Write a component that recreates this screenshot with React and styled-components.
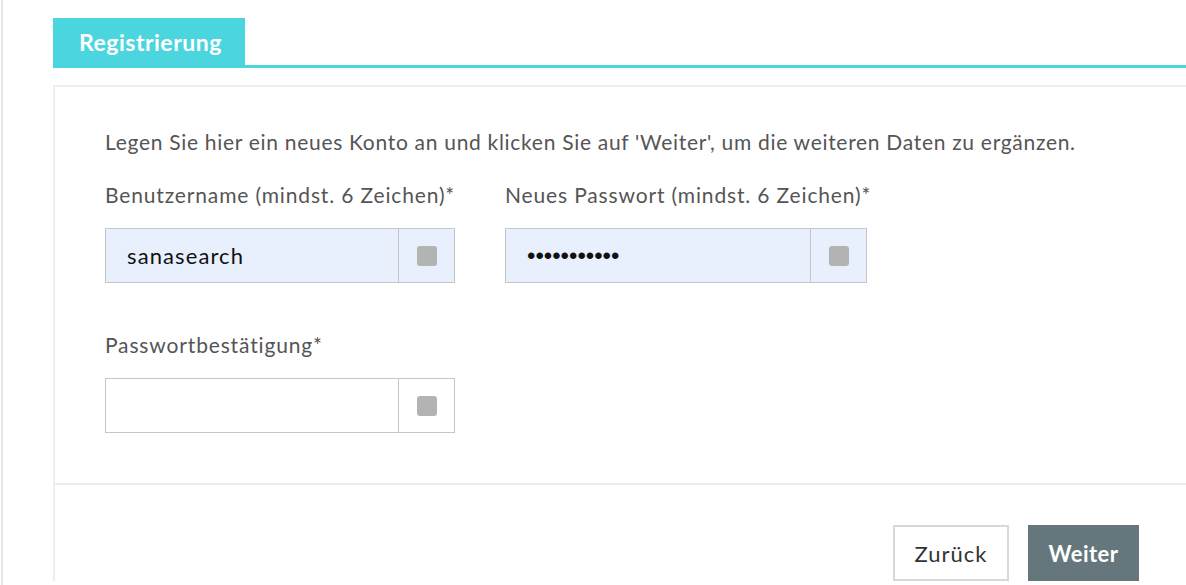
import React from "react";
import styled, { createGlobalStyle } from "styled-components";

const Global = createGlobalStyle`
  html, body { margin: 0; padding: 0; background: #fff; }
  body { font-family: Lato, "Open Sans", "Liberation Sans", sans-serif; overflow: hidden; }
  * { box-sizing: border-box; }
`;

const Page = styled.div`
  margin-left: 1px;
  border-left: 2px solid #e6e6e6;
  min-height: 585px;
  padding: 18px 0 0 50px;
`;

const TabBar = styled.div`
  display: flex;
  align-items: flex-end;
`;

const Tab = styled.div`
  width: 192px;
  height: 50px;
  background: #4bd5df;
  color: #fff;
  font-weight: 700;
  font-size: 23px;
  letter-spacing: 0.5px;
  display: flex;
  align-items: center;
  padding-left: 26px;
  padding-bottom: 2px;
`;

const TabLine = styled.div`
  flex: 1;
  height: 3px;
  background: #4bd5df;
`;

const Panel = styled.div`
  margin-top: 17px;
  border-top: 2px solid #efefef;
  border-left: 2px solid #efefef;
`;

const Body = styled.div`
  padding: 43px 0 50px 50px;
  border-bottom: 2px solid #ececec;
`;

const Intro = styled.p`
  margin: 0 0 29px;
  font-size: 21px;
  letter-spacing: 0.7px;
  line-height: 24px;
  color: #555;
  white-space: nowrap;
`;

const Grid = styled.div`
  display: grid;
  grid-template-columns: 350px 362px;
  column-gap: 50px;
  row-gap: 50px;
`;

const Field = styled.div`
  display: flex;
  flex-direction: column;
  gap: 21px;
`;

const Label = styled.label`
  font-size: 21px;
  letter-spacing: 0.85px;
  line-height: 24px;
  color: #555;
  white-space: nowrap;
`;

const InputGroup = styled.div`
  display: flex;
  height: 55px;
  border: 1px solid #c6c6c6;
  background: ${(p) => (p.$filled ? "#e8f0fe" : "#fff")};
`;

const Input = styled.input`
  flex: 1;
  min-width: 0;
  border: none;
  outline: none;
  background: transparent;
  padding: 0 0 0 21px;
  font-family: ${(p) => (p.type === "password" ? '"Liberation Sans", Arial, sans-serif' : 'Lato, "Open Sans", sans-serif')};
  font-size: ${(p) => (p.type === "password" ? "24px" : "22px")};
  letter-spacing: ${(p) => (p.type === "password" ? "0" : "1.1px")};
  color: #111;
`;

const Addon = styled.div`
  width: 56px;
  border-left: 1px solid #c6c6c6;
  display: flex;
  align-items: center;
  justify-content: center;
`;

const Square = styled.span`
  width: 20px;
  height: 20px;
  border-radius: 3px;
  background: #b3b3b3;
`;

const Footer = styled.div`
  display: flex;
  justify-content: flex-end;
  gap: 19px;
  padding: 40px 47px 0 0;
`;

const Button = styled.button`
  height: 56px;
  padding: 0;
  font-family: Lato, "Open Sans", sans-serif;
  font-size: 22px;
  letter-spacing: ${(p) => (p.$primary ? "0.5px" : "1px")};
  cursor: pointer;
  border: 2px solid ${(p) => (p.$primary ? "#65777c" : "#d8d8d8")};
  background: ${(p) => (p.$primary ? "#65777c" : "#fff")};
  color: ${(p) => (p.$primary ? "#fff" : "#333")};
  font-weight: ${(p) => (p.$primary ? 700 : 400)};
  width: ${(p) => p.$w}px;
`;

function TextField({ label, value, type = "text" }) {
  return (
    <Field>
      <Label>{label}</Label>
      <InputGroup $filled={!!value}>
        <Input type={type} value={value} readOnly />
        <Addon>
          <Square />
        </Addon>
      </InputGroup>
    </Field>
  );
}

export default function App() {
  return (
    <>
      <Global />
      <Page>
        <TabBar>
          <Tab>Registrierung</Tab>
          <TabLine />
        </TabBar>
        <Panel>
          <Body>
            <Intro>
              Legen Sie hier ein neues Konto an und klicken Sie auf 'Weiter', um die weiteren Daten zu ergänzen.
            </Intro>
            <Grid>
              <TextField label="Benutzername (mindst. 6 Zeichen)*" value="sanasearch" />
              <TextField label="Neues Passwort (mindst. 6 Zeichen)*" value="sanasearch1" type="password" />
              <TextField label="Passwortbestätigung*" value="" />
            </Grid>
          </Body>
          <Footer>
            <Button $w={116}>Zurück</Button>
            <Button $primary $w={111}>Weiter</Button>
          </Footer>
        </Panel>
      </Page>
    </>
  );
}
